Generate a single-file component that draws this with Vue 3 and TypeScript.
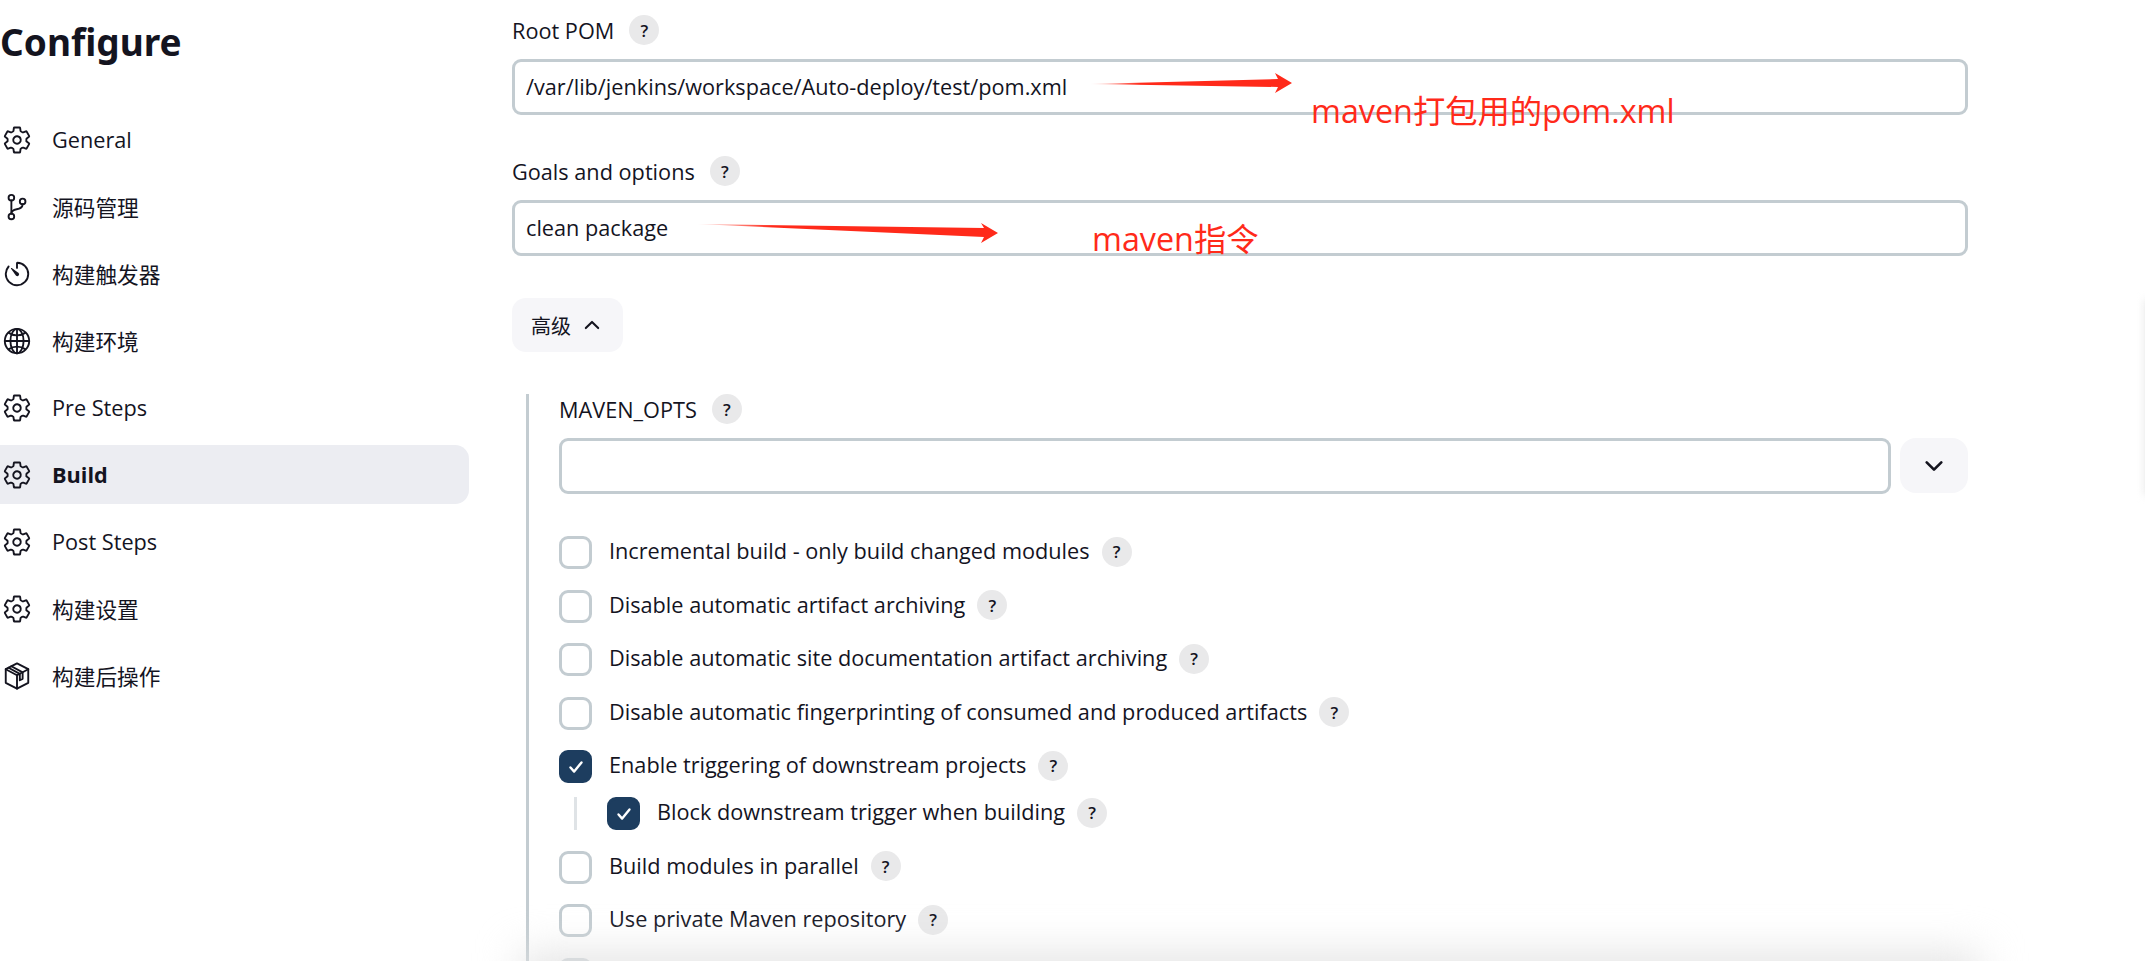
<script setup lang="ts">
type NavItem = { label: string; icon: string; active?: boolean };
type CheckItem = { label: string; checked?: boolean; children?: CheckItem[] };

const navItems: NavItem[] = [
  { label: "General", icon: "gear" },
  { label: "源码管理", icon: "branch" },
  { label: "构建触发器", icon: "timer" },
  { label: "构建环境", icon: "globe" },
  { label: "Pre Steps", icon: "gear" },
  { label: "Build", icon: "gear", active: true },
  { label: "Post Steps", icon: "gear" },
  { label: "构建设置", icon: "gear" },
  { label: "构建后操作", icon: "box" },
];

const checks: CheckItem[] = [
  { label: "Incremental build - only build changed modules" },
  { label: "Disable automatic artifact archiving" },
  { label: "Disable automatic site documentation artifact archiving" },
  { label: "Disable automatic fingerprinting of consumed and produced artifacts" },
  {
    label: "Enable triggering of downstream projects",
    checked: true,
    children: [{ label: "Block downstream trigger when building", checked: true }],
  },
  { label: "Build modules in parallel" },
  { label: "Use private Maven repository" },
];

const gearPath =
  "M262.29 192.31a64 64 0 1057.4 57.4 64.13 64.13 0 00-57.4-57.4zM416.39 256a154.34 154.34 0 01-1.53 20.79l45.21 35.46a10.81 10.81 0 012.45 13.75l-42.77 74a10.81 10.81 0 01-13.14 4.59l-44.9-18.08a16.11 16.11 0 00-15.17 1.75A164.48 164.48 0 01325 400.8a15.94 15.94 0 00-8.82 12.14l-6.73 47.89a11.08 11.08 0 01-10.68 9.17h-85.54a11.11 11.11 0 01-10.69-8.87l-6.72-47.82a16.07 16.07 0 00-9-12.22 155.3 155.3 0 01-21.46-12.57 16 16 0 00-15.11-1.71l-44.89 18.07a10.81 10.81 0 01-13.14-4.58l-42.77-74a10.8 10.8 0 012.45-13.75l38.21-30a16.05 16.05 0 006-14.08c-.36-4.17-.58-8.33-.58-12.5s.21-8.27.58-12.35a16 16 0 00-6.07-13.94l-38.19-30A10.81 10.81 0 0149.48 186l42.77-74a10.81 10.81 0 0113.14-4.59l44.9 18.08a16.11 16.11 0 0015.17-1.75A164.48 164.48 0 01187 111.2a15.94 15.94 0 008.82-12.14l6.73-47.89A11.08 11.08 0 01213.23 42h85.54a11.11 11.11 0 0110.69 8.87l6.72 47.82a16.07 16.07 0 009 12.22 155.3 155.3 0 0121.46 12.57 16 16 0 0015.11 1.71l44.89-18.07a10.81 10.81 0 0113.14 4.58l42.77 74a10.8 10.8 0 01-2.45 13.75l-38.21 30a16.05 16.05 0 00-6.05 14.08c.33 4.14.55 8.3.55 12.47z";
</script>

<template>
  <div class="page">
    <aside class="side">
      <h1 class="side__title">Configure</h1>
      <nav class="side__nav">
        <div
          v-for="item in navItems"
          :key="item.label"
          class="side__item"
          :class="{ 'side__item--active': item.active }"
        >
          <svg class="side__icon" viewBox="0 0 512 512">
            <path v-if="item.icon === 'gear'" :d="gearPath" />
            <template v-else-if="item.icon === 'branch'">
              <circle cx="160" cy="96" r="48" />
              <circle cx="160" cy="416" r="48" />
              <path d="M160 368V144" />
              <circle cx="352" cy="160" r="48" />
              <path d="M352 208c0 128-192 48-192 160" />
            </template>
            <template v-else-if="item.icon === 'timer'">
              <path d="M112.91 128A191.85 191.85 0 0064 254c-1.18 106.35 85.65 193.8 192 194 106.2.2 192-85.83 192-192 0-104.54-83.55-189.61-187.5-192a4.36 4.36 0 00-4.5 4.37V152" />
              <path class="fill" d="M233.38 278.63l-79-113a8.13 8.13 0 0111.32-11.32l113 79a32.5 32.5 0 01-37.25 53.26 33.21 33.21 0 01-8.07-7.94z" />
            </template>
            <template v-else-if="item.icon === 'globe'">
              <path d="M256 48C141.13 48 48 141.13 48 256s93.13 208 208 208 208-93.13 208-208S370.87 48 256 48z" />
              <path d="M256 48c-58.07 0-112.67 93.13-112.67 208S197.93 464 256 464s112.67-93.13 112.67-208S314.07 48 256 48z" />
              <path d="M117.33 117.33c38.24 27.15 86.38 43.34 138.67 43.34s100.43-16.19 138.67-43.34M394.67 394.67c-38.24-27.15-86.38-43.34-138.67-43.34s-100.43 16.19-138.67 43.34" />
              <path d="M256 48v416M464 256H48" />
            </template>
            <template v-else>
              <path d="M256 40L448 140v232L256 472 64 372V140z" />
              <path d="M64 140l192 104 192-104M256 244v228" />
              <path d="M160 90l192 104v110l-48 24V220L112 116" />
            </template>
          </svg>
          <span>{{ item.label }}</span>
        </div>
      </nav>
    </aside>

    <main class="main">
      <section class="field">
        <div class="label">Root POM <span class="help">?</span></div>
        <input class="input" readonly value="/var/lib/jenkins/workspace/Auto-deploy/test/pom.xml" />
      </section>

      <section class="field field--last">
        <div class="label">Goals and options <span class="help">?</span></div>
        <input class="input" readonly value="clean package" />
      </section>

      <button class="advanced" type="button">
        高级
        <svg class="advanced__icon" viewBox="0 0 512 512"><path d="M112 328l144-144 144 144" /></svg>
      </button>

      <section class="opts">
        <div class="label">MAVEN_OPTS <span class="help">?</span></div>
        <div class="opts__row">
          <input class="input" readonly value="" />
          <button class="opts__more" type="button">
            <svg viewBox="0 0 512 512"><path d="M112 184l144 144 144-144" /></svg>
          </button>
        </div>

        <div class="checks">
          <div v-for="c in checks" :key="c.label" class="checks__group">
            <label class="check">
              <span class="box" :class="{ 'box--on': c.checked }">
                <svg v-if="c.checked" viewBox="0 0 24 24"><path d="M6 12.5l4 4.5 8-10" /></svg>
              </span>
              <span class="check__text">{{ c.label }}</span>
              <span class="help">?</span>
            </label>
            <div v-if="c.children" class="checks__sub">
              <label v-for="s in c.children" :key="s.label" class="check">
                <span class="box" :class="{ 'box--on': s.checked }">
                  <svg v-if="s.checked" viewBox="0 0 24 24"><path d="M6 12.5l4 4.5 8-10" /></svg>
                </span>
                <span class="check__text">{{ s.label }}</span>
                <span class="help">?</span>
              </label>
            </div>
          </div>
          <span class="box"></span>
        </div>
      </section>
    </main>

    <!-- тени у нижнего и правого края -->
    <div class="fade fade--bottom"></div>
    <div class="fade fade--right"></div>

    <!-- красные пометки поверх скриншота -->
    <svg class="marks" viewBox="0 0 2145 961">
      <defs>
        <linearGradient id="tail" x1="0" y1="0" x2="1" y2="0">
          <stop offset="0" stop-color="#ff2a1a" stop-opacity="0.1" />
          <stop offset="0.25" stop-color="#ff2a1a" />
        </linearGradient>
      </defs>
      <polygon fill="url(#tail)" points="1090,84 1278,79 1275,73 1292,83 1275,93 1278,87" />
      <polygon fill="url(#tail)" points="697,224 984,228 981,223 998,233 981,243 984,237" />
    </svg>
    <div class="note note--pom">maven打包用的pom.xml</div>
    <div class="note note--cmd">maven指令</div>
  </div>
</template>

<style>
html,
body {
  margin: 0;
  background: #fff;
  overflow: hidden;
}
</style>

<style scoped>
.page {
  position: relative;
  display: flex;
  width: 2145px;
  height: 961px;
  overflow: hidden;
  color: #14141f;
  font-family: "Open Sans", "Noto Sans CJK SC", sans-serif;
  font-size: 21.7px;
}
.side {
  width: 469px;
  flex: none;
}
.side__title {
  margin: 0;
  height: 110px;
  padding-top: 16px;
  box-sizing: border-box;
  font-family: "Noto Sans", "Noto Sans CJK SC", sans-serif;
  font-size: 37px;
  line-height: 52px;
  font-weight: 700;
}
.side__nav {
  display: flex;
  flex-direction: column;
  gap: 8px;
}
.side__item {
  display: flex;
  align-items: center;
  gap: 20px;
  height: 59px;
  padding-left: 2px;
  border-radius: 0 14px 14px 0;
}
.side__item--active {
  background: #ecedf2;
  font-weight: 700;
}
.side__icon {
  width: 30px;
  height: 30px;
  flex: none;
  fill: none;
  stroke: #14141f;
  stroke-width: 32;
  stroke-linecap: round;
  stroke-linejoin: round;
}
.side__icon .fill {
  fill: #14141f;
  stroke: none;
}
.main {
  width: 1456px;
  margin-left: 43px;
  padding-top: 15px;
}
.field {
  margin-bottom: 41px;
}
.field--last {
  margin-bottom: 42px;
}
.label {
  display: flex;
  align-items: center;
  gap: 15px;
  height: 30px;
  margin-bottom: 14px;
}
.help {
  display: inline-flex;
  align-items: center;
  justify-content: center;
  width: 30px;
  height: 30px;
  flex: none;
  border-radius: 50%;
  background: #e9e9ea;
  font-size: 17px;
  font-weight: 600;
}
.input {
  display: block;
  width: 100%;
  height: 56px;
  box-sizing: border-box;
  padding: 0 11px 2px;
  border: 3px solid #c3ccd1;
  border-radius: 9px;
  outline: none;
  background: #fff;
  color: inherit;
  font: inherit;
}
.advanced {
  display: flex;
  align-items: center;
  gap: 10px;
  height: 54px;
  width: 111px;
  margin-bottom: 42px;
  padding: 0 0 0 19px;
  border: 0;
  border-radius: 14px;
  background: #f6f6f9;
  color: inherit;
  font: inherit;
  font-size: 20px;
}
.advanced__icon,
.opts__more svg {
  fill: none;
  stroke: #14141f;
  stroke-linecap: round;
  stroke-linejoin: round;
}
.advanced__icon {
  width: 22px;
  height: 22px;
  stroke-width: 48;
}
.opts__more svg {
  width: 26px;
  height: 26px;
  stroke-width: 52;
}
.opts {
  margin-left: 14px;
  padding-left: 30px;
  border-left: 3px solid #c3ccd1;
  height: 700px;
}
.opts__row {
  display: flex;
  gap: 9px;
}
.opts__row .input {
  flex: 1;
  width: auto;
}
.opts__more {
  display: flex;
  align-items: center;
  justify-content: center;
  width: 68px;
  height: 55px;
  flex: none;
  padding: 0;
  border: 0;
  border-radius: 16px;
  background: #f6f6f9;
}
.checks {
  display: flex;
  flex-direction: column;
  gap: 20.5px;
  margin-top: 42px;
}
.checks__group {
  display: flex;
  flex-direction: column;
  gap: 14px;
}
.checks__sub {
  margin-left: 15px;
  padding-left: 30px;
  border-left: 3px solid #dfe3e6;
}
.check {
  display: flex;
  align-items: center;
  gap: 12px;
  height: 33px;
}
.check__text {
  margin-bottom: 4px;
}
.check .help {
  margin-bottom: 2px;
}
.box {
  display: flex;
  align-items: center;
  justify-content: center;
  width: 33px;
  height: 33px;
  margin-right: 5px;
  flex: none;
  box-sizing: border-box;
  border: 3px solid #c3ccd1;
  border-radius: 9px;
}
.box--on {
  border-color: #1d3d5f;
  background: #1d3d5f;
}
.box svg {
  width: 22px;
  height: 22px;
  fill: none;
  stroke: #fff;
  stroke-width: 2.6;
  stroke-linecap: round;
  stroke-linejoin: round;
}
.fade {
  position: absolute;
  pointer-events: none;
  background: #e4e4e4;
  filter: blur(20px);
}
.fade--bottom {
  left: 520px;
  width: 1460px;
  bottom: -42px;
  height: 50px;
}
.fade--right {
  right: -14px;
  top: 300px;
  width: 14px;
  height: 195px;
  filter: blur(4px);
}
.marks {
  position: absolute;
  left: 0;
  top: 0;
  width: 2145px;
  height: 961px;
  pointer-events: none;
}
.note {
  position: absolute;
  color: #ff2a1a;
  font-family: "Open Sans", "Noto Sans CJK SC", sans-serif;
  font-size: 32.3px;
  line-height: 44px;
  white-space: nowrap;
}
.note--pom {
  left: 1311px;
  top: 88px;
}
.note--cmd {
  left: 1092px;
  top: 216px;
}
</style>
